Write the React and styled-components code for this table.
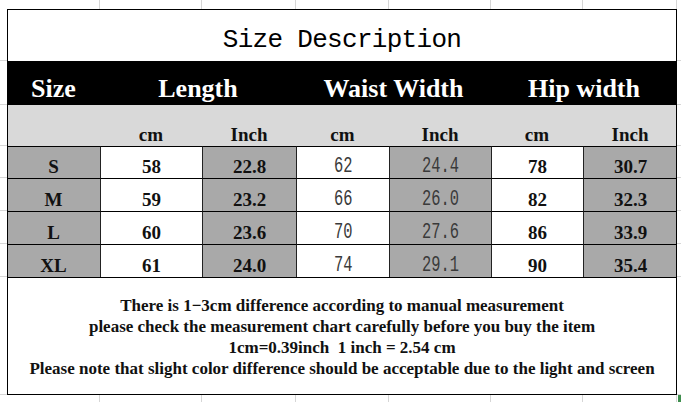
import React from 'react';
import styled, { createGlobalStyle } from 'styled-components';

const GlobalStyle = createGlobalStyle`
  html, body {
    margin: 0;
    padding: 0;
    background: #fff;
  }
`;

const GRID_LINE = '#d6d6d6';
const INK = '#111';

const Sheet = styled.div`
  display: grid;
  width: 681px;
  height: 402px;
  overflow: hidden;
  grid-template-columns: 7px 93px 102px 94px 93px 102px 92px 94px 1fr;
  grid-template-rows: 9px 52px 44px 41px 32px 33px 33px 33px 118px 1fr;
  font-family: 'Liberation Serif', 'Times New Roman', serif;
`;

const Gutter = styled.div`
  grid-row: ${(p) => p.$row};
  grid-column: ${(p) => p.$col};
  box-sizing: border-box;
  border-right: ${(p) => (p.$vertical ? `1px solid ${GRID_LINE}` : 'none')};
  border-bottom: ${(p) => (p.$horizontal ? `1px solid ${GRID_LINE}` : 'none')};
  display: flex;
  justify-content: flex-end;
  align-items: flex-start;
`;

const FillHandle = styled.span`
  display: block;
  width: 3px;
  height: 8px;
  margin-right: 0;
  background: #3f8f4e;
`;

const Frame = styled.div`
  grid-row: 2 / 10;
  grid-column: 2 / 9;
  border: 1px solid #000;
  pointer-events: none;
  z-index: 2;
`;

const Title = styled.div`
  grid-row: 2;
  grid-column: 2 / 9;
  display: flex;
  justify-content: center;
  align-items: flex-end;
  padding-bottom: 8px;
  font-family: 'Liberation Mono', 'Courier New', monospace;
  font-size: 26px;
  letter-spacing: -0.7px;
  line-height: 1;
  color: #000;
`;

const HeadCell = styled.div`
  grid-row: 3;
  grid-column: ${(p) => p.$col};
  background: #000;
  color: #fff;
  display: flex;
  justify-content: center;
  align-items: flex-end;
  padding-bottom: 3px;
  font-size: 26px;
  font-weight: 700;
  line-height: 1;
`;

const UnitCell = styled.div`
  grid-row: 4;
  grid-column: ${(p) => p.$col};
  background: #d9d9d9;
  color: ${INK};
  display: flex;
  justify-content: center;
  align-items: flex-end;
  padding-bottom: 2px;
  font-size: 19px;
  font-weight: 700;
  line-height: 1;
`;

const DataCell = styled.div`
  grid-row: ${(p) => p.$row};
  grid-column: ${(p) => p.$col};
  box-sizing: border-box;
  background: ${(p) => (p.$shade ? '#a9a9a9' : '#fff')};
  border-top: 1px solid #000;
  border-left: ${(p) => (p.$first ? 'none' : '1px solid #222')};
  display: flex;
  justify-content: center;
  align-items: flex-end;
  padding-bottom: ${(p) => (p.$mono ? '0' : '2px')};
  color: ${(p) => (p.$mono ? '#3a3a3a' : INK)};
  font-family: ${(p) => (p.$mono ? "'Liberation Mono', 'Courier New', monospace" : 'inherit')};
  font-size: ${(p) => (p.$mono ? '22px' : '19px')};
  font-weight: ${(p) => (p.$mono ? 400 : 700)};
  line-height: 1;
`;

const Narrow = styled.span`
  display: inline-block;
  transform: scaleX(0.7);
`;

const Notes = styled.div`
  grid-row: 9;
  grid-column: 2 / 9;
  box-sizing: border-box;
  border-top: 1px solid #000;
  display: flex;
  flex-direction: column;
  justify-content: center;
  align-items: center;
  font-size: 17px;
  font-weight: 700;
  line-height: 21px;
  color: ${INK};
  white-space: pre;
`;

const COLS = [2, 3, 4, 5, 6, 7, 8];

const ROWS = [
  { size: 'S', length: ['58', '22.8'], waist: ['62', '24.4'], hip: ['78', '30.7'] },
  { size: 'M', length: ['59', '23.2'], waist: ['66', '26.0'], hip: ['82', '32.3'] },
  { size: 'L', length: ['60', '23.6'], waist: ['70', '27.6'], hip: ['86', '33.9'] },
  { size: 'XL', length: ['61', '24.0'], waist: ['74', '29.1'], hip: ['90', '35.4'] },
];

const NOTES = [
  'There is 1\u22123cm difference according to manual measurement',
  'please check the measurement chart carefully before you buy the item',
  '1cm=0.39inch  1 inch = 2.54 cm',
  'Please note that slight color difference should be acceptable due to the light and screen',
];

function Gutters() {
  const cells = [];
  // top and bottom strips: vertical lines at column edges
  [1, 10].forEach((row) => {
    [1, ...COLS, 9].forEach((col) => {
      cells.push(
        <Gutter key={`v-${row}-${col}`} $row={row} $col={col} $vertical={col !== 1 && col !== 9}>
          {row === 10 && col === 9 && <FillHandle />}
        </Gutter>,
      );
    });
  });
  // left and right strips: horizontal lines at row edges
  [1, 9].forEach((col) => {
    for (let row = 2; row <= 9; row += 1) {
      cells.push(<Gutter key={`h-${row}-${col}`} $row={row} $col={col} $horizontal />);
    }
  });
  return cells;
}

export default function App() {
  return (
    <>
      <GlobalStyle />
      <Sheet>
        <Gutters />

        <Title>Size Description</Title>

        <HeadCell $col="2">Size</HeadCell>
        <HeadCell $col="3 / 5">Length</HeadCell>
        <HeadCell $col="5 / 7">Waist Width</HeadCell>
        <HeadCell $col="7 / 9">Hip width</HeadCell>

        <UnitCell $col="2" />
        {['cm', 'Inch', 'cm', 'Inch', 'cm', 'Inch'].map((u, i) => (
          <UnitCell key={i} $col={i + 3}>{u}</UnitCell>
        ))}

        {ROWS.map((r, i) => {
          const row = i + 5;
          return (
            <React.Fragment key={r.size}>
              <DataCell $row={row} $col={2} $shade $first>{r.size}</DataCell>
              <DataCell $row={row} $col={3}>{r.length[0]}</DataCell>
              <DataCell $row={row} $col={4} $shade>{r.length[1]}</DataCell>
              <DataCell $row={row} $col={5} $mono><Narrow>{r.waist[0]}</Narrow></DataCell>
              <DataCell $row={row} $col={6} $mono $shade><Narrow>{r.waist[1]}</Narrow></DataCell>
              <DataCell $row={row} $col={7}>{r.hip[0]}</DataCell>
              <DataCell $row={row} $col={8} $shade>{r.hip[1]}</DataCell>
            </React.Fragment>
          );
        })}

        <Notes>
          {NOTES.map((line) => (
            <div key={line}>{line}</div>
          ))}
        </Notes>

        <Frame />
      </Sheet>
    </>
  );
}
